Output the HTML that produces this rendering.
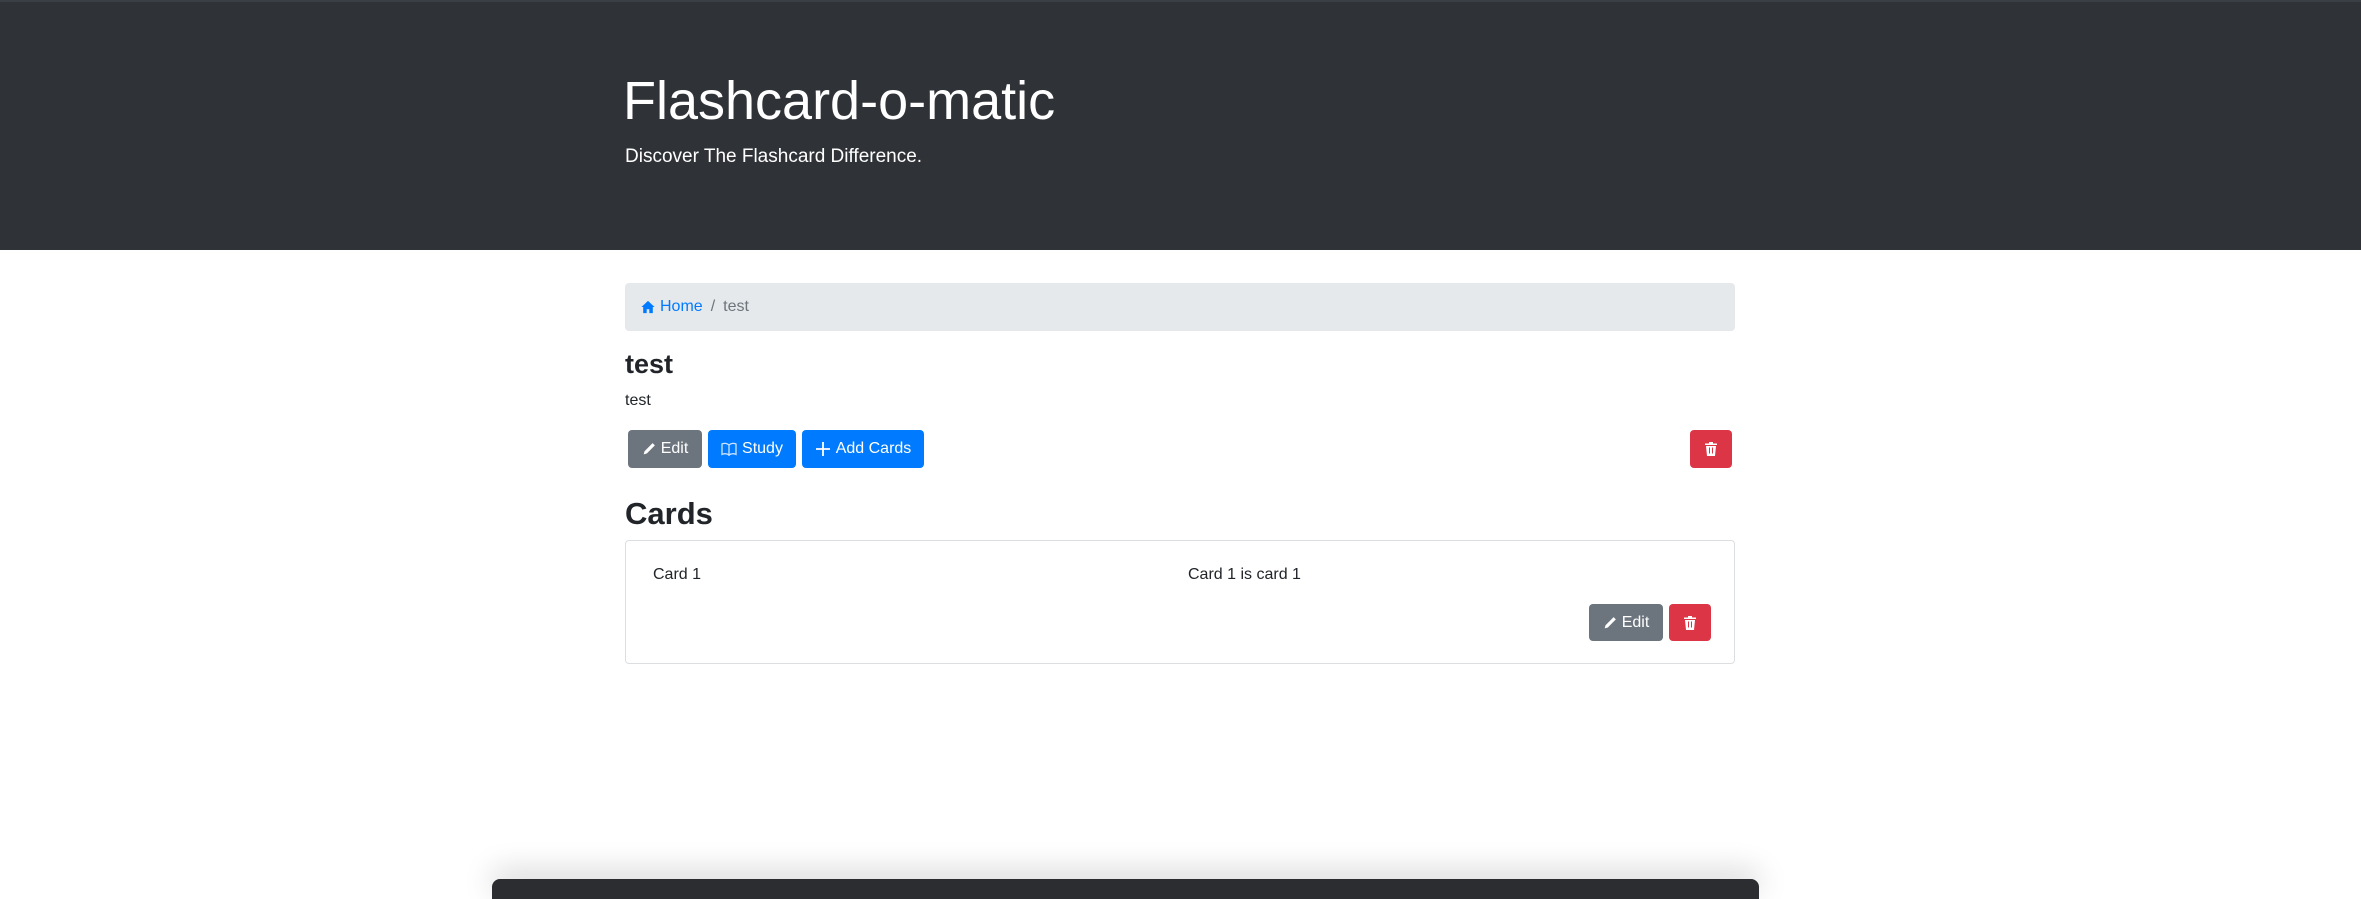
<!DOCTYPE html>
<html><head><meta charset="utf-8"><style>
*{box-sizing:border-box}
body{margin:0;width:2361px;height:885px;overflow:hidden;background:#fff;font-family:"Liberation Sans",Arial,sans-serif;color:#212529;font-size:16px;position:relative}
.jumbo{position:absolute;left:0;top:0;width:2361px;height:250px;background:#2f3337;border-top:2px solid #3a3f45}
.t{position:absolute;left:623px;top:69px;font-size:54px;font-weight:300;color:#fff;line-height:1.2}
.lead{position:absolute;left:625px;top:146px;font-size:19px;color:#fff;font-weight:300}
.bc{position:absolute;left:625px;top:283px;width:1110px;height:48px;background:#e6e9ec;border-radius:4px;padding:12px 16px;line-height:24px;display:flex;align-items:center}
.bc .s{color:#6c757d;padding:0 8px}
.bc .c{color:#6c757d}
.abs{position:absolute}
.btn{position:absolute;height:38px;border-radius:4px;color:#fff;font-size:16px;line-height:38px;display:flex;align-items:center;justify-content:center;gap:5px}
.sec{background:#6c757d}.pri{background:#007bff}.dan{background:#dc3545}
.card{position:absolute;left:625px;top:540px;width:1110px;height:124px;border:1px solid #dcdfe2;border-radius:4px}
svg{display:block}
</style></head><body>
<div class="jumbo"></div>
<div class="t">Flashcard-o-matic</div>
<div class="lead">Discover The Flashcard Difference.</div>
<div class="bc"><span style="display:inline-flex;align-items:center;gap:5px;color:#007bff"><svg width="14" height="14" viewBox="0 0 16 16"><path fill="#007bff" d="M8 1 0.5 8H2.5V15H6.5V10.5H9.5V15H13.5V8H15.5Z"/></svg>Home</span><span class="s">/</span><span class="c">test</span></div>
<div class="abs" style="left:625px;top:347px;font-size:27px;font-weight:bold;line-height:34px">test</div>
<div class="abs" style="left:625px;top:389px;line-height:24px">test</div>
<div class="btn sec" style="left:628px;top:430px;width:74px"><svg width="14" height="14" viewBox="0 0 16 16"><path fill="#fff" d="M12.1 1.3l2.6 2.6-9.2 9.2-3.6 1 1-3.6z"/></svg>Edit</div>
<div class="btn pri" style="left:708px;top:430px;width:88px"><svg width="16" height="14" viewBox="0 0 16 14"><path fill="none" stroke="#cfe3ff" stroke-width="1.3" d="M1 2c2-1 5-1 7 1v10c-2-1.6-5-1.6-7-.6zM15 2c-2-1-5-1-7 1v10c2-1.6 5-1.6 7-.6z"/></svg>Study</div>
<div class="btn pri" style="left:802px;top:430px;width:122px"><svg width="16" height="16" viewBox="0 0 16 16"><path stroke="#fff" stroke-width="1.8" d="M8 1v14M1 8h14"/></svg>Add Cards</div>
<div class="btn dan" style="left:1690px;top:430px;width:42px"><svg width="12" height="14" viewBox="0 0 12 14"><path fill="#fff" d="M4 0h4v1.5h4v1.5H0V1.5h4zM1 4h10l-1 10H2z"/><path stroke="#dc3545" stroke-width="1" d="M4.5 5.5v6M7.5 5.5v6"/></svg></div>
<div class="abs" style="left:625px;top:495px;font-size:31px;font-weight:bold;line-height:38px">Cards</div>
<div class="card"></div>
<div class="abs" style="left:653px;top:563px;line-height:24px">Card 1</div>
<div class="abs" style="left:1188px;top:563px;line-height:24px">Card 1 is card 1</div>
<div class="btn sec" style="left:1589px;top:604px;width:74px;height:37px"><svg width="14" height="14" viewBox="0 0 16 16"><path fill="#fff" d="M12.1 1.3l2.6 2.6-9.2 9.2-3.6 1 1-3.6z"/></svg>Edit</div>
<div class="btn dan" style="left:1669px;top:604px;width:42px;height:37px"><svg width="12" height="14" viewBox="0 0 12 14"><path fill="#fff" d="M4 0h4v1.5h4v1.5H0V1.5h4zM1 4h10l-1 10H2z"/><path stroke="#dc3545" stroke-width="1" d="M4.5 5.5v6M7.5 5.5v6"/></svg></div>
<div class="abs" style="left:492px;top:879px;width:1267px;height:20px;background:#2b2d30;border-radius:8px 8px 0 0;box-shadow:0 -8px 30px rgba(0,0,0,0.18)"></div>
</body></html>
